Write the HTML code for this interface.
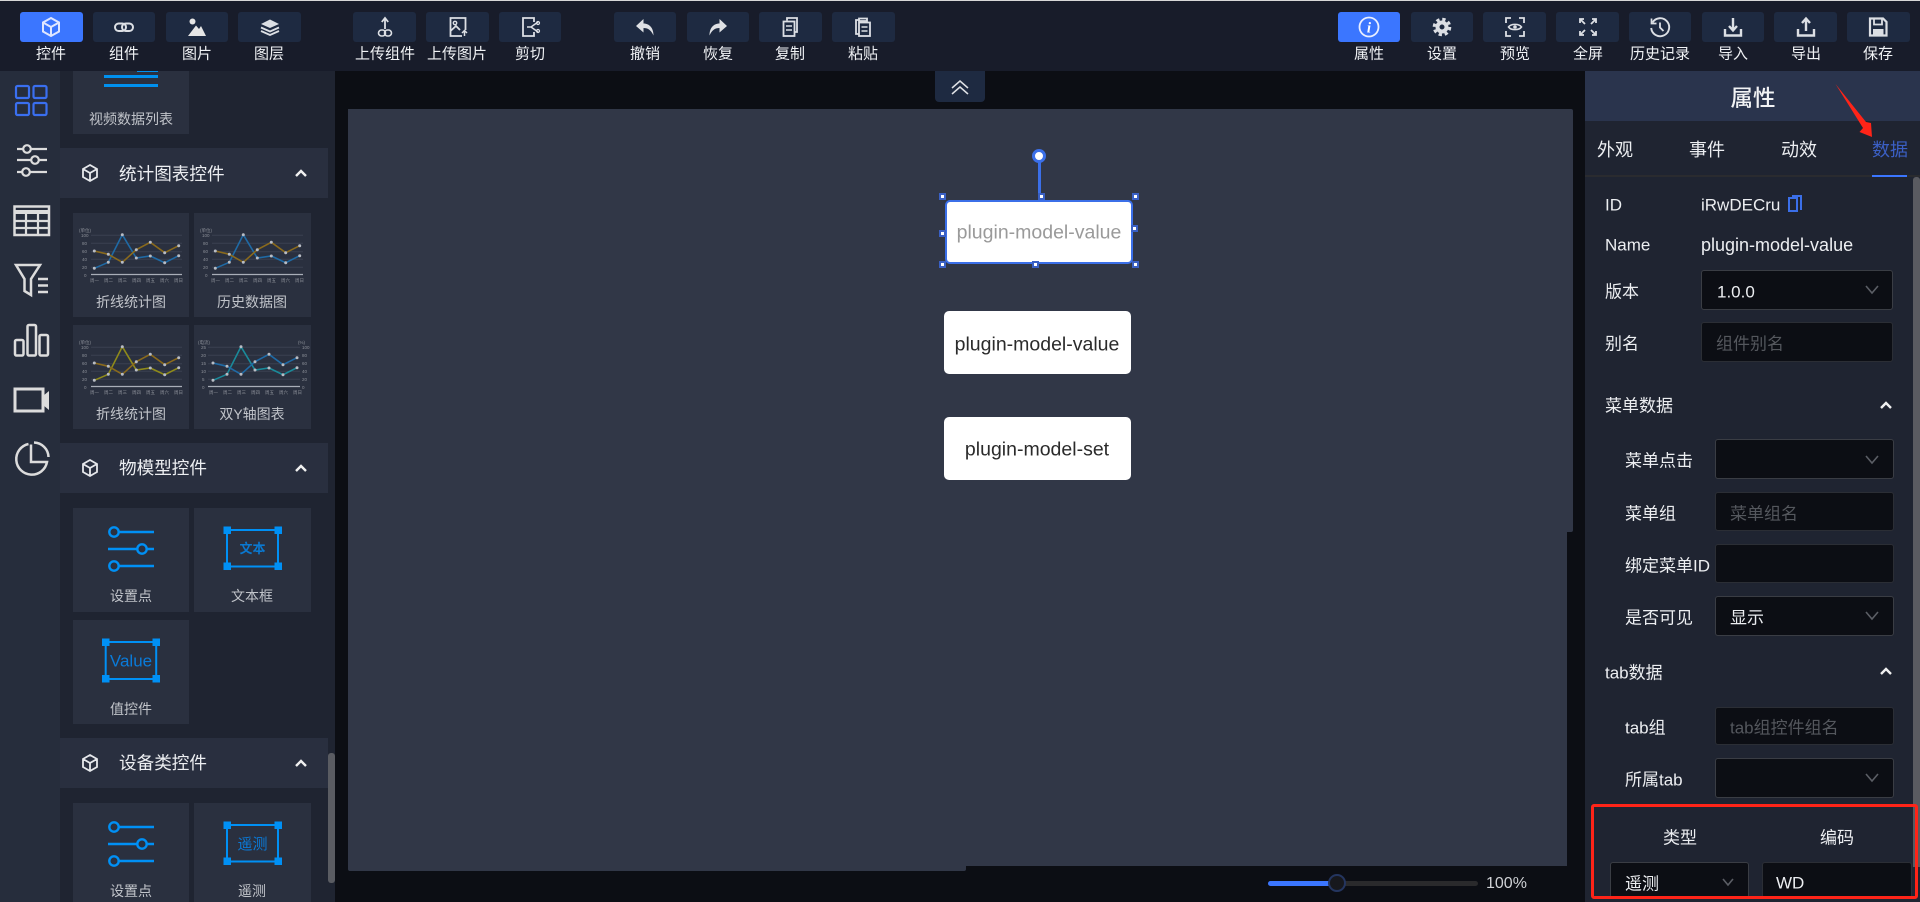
<!DOCTYPE html>
<html lang="zh"><head><meta charset="utf-8"><title>属性</title>
<style>
html,body{margin:0;padding:0;background:#0c0e14;width:1920px;height:902px;overflow:hidden;}
#root{position:absolute;left:0;top:0;width:1920px;height:902px;overflow:hidden;font-family:"Liberation Sans","Noto Sans CJK SC",sans-serif;color:#e6e8ec;}
.a{position:absolute;}
.c{position:absolute;white-space:nowrap;line-height:1;transform:translate(-50%,-50%);}
.l{position:absolute;white-space:nowrap;line-height:1;transform:translateY(-50%);}
.b{position:absolute;top:12px;height:30px;background:#1e2a41;border-radius:3px;}
.b.on{background:#3b76ff;}
.tl{font-size:15px;color:#f0f2f5;margin-top:1px;}
svg{position:absolute;overflow:visible;}
.i{width:24px;height:24px;top:15px;fill:none;stroke:#dcdfe4;stroke-width:2;}
.card{position:absolute;width:116px;height:104px;background:#2a303f;}
.card2{width:117px;}
.cl{font-size:14px;color:#c1c4ca;}
.head{position:absolute;left:60px;width:268px;height:50px;background:#292f3f;}
.ht{font-size:17.6px;color:#eceef1;margin-top:1px;}
.f{font-size:17px;color:#eceef1;margin-top:1px;}
.n{margin-top:0;}
.in{position:absolute;background:#0c0e14;border:1px solid #2b2e35;border-radius:3px;box-sizing:border-box;}
.ph{font-size:17px;color:#54575d;margin-top:1px;}
.ar{fill:none;stroke:#5b5e65;stroke-width:1.6;}
.ch{fill:none;stroke:#f0f0f0;stroke-width:2.4;}
.rail{fill:none;stroke:#dcdcdc;stroke-width:2.5;}
.h{position:absolute;width:7px;height:7px;background:#fff;border:2px solid #3a60c4;box-sizing:border-box;}
</style></head><body><div id="root">
<div class="a" style="left:0;top:0;width:1920px;height:1px;background:#d8d8d8"></div>
<div class="a" style="left:0;top:1px;width:1920px;height:70px;background:#181c2a"></div>

<!-- toolbar buttons -->
<div class="b on" style="left:20px;width:63px"></div>
<div class="b" style="left:93px;width:62px"></div>
<div class="b" style="left:166px;width:62px"></div>
<div class="b" style="left:238px;width:63px"></div>
<div class="b" style="left:353px;width:63px"></div>
<div class="b" style="left:426px;width:63px"></div>
<div class="b" style="left:499px;width:62px"></div>
<div class="b" style="left:614px;width:62px"></div>
<div class="b" style="left:687px;width:62px"></div>
<div class="b" style="left:759px;width:63px"></div>
<div class="b" style="left:832px;width:63px"></div>
<div class="b on" style="left:1338px;width:62px"></div>
<div class="b" style="left:1411px;width:62px"></div>
<div class="b" style="left:1483px;width:63px"></div>
<div class="b" style="left:1556px;width:63px"></div>
<div class="b" style="left:1629px;width:62px"></div>
<div class="b" style="left:1702px;width:62px"></div>
<div class="b" style="left:1774px;width:63px"></div>
<div class="b" style="left:1847px;width:63px"></div>

<!-- toolbar labels -->
<div class="c tl" style="left:51px;top:53px">控件</div>
<div class="c tl" style="left:124px;top:53px">组件</div>
<div class="c tl" style="left:197px;top:53px">图片</div>
<div class="c tl" style="left:269px;top:53px">图层</div>
<div class="c tl" style="left:385px;top:53px">上传组件</div>
<div class="c tl" style="left:457px;top:53px">上传图片</div>
<div class="c tl" style="left:530px;top:53px">剪切</div>
<div class="c tl" style="left:645px;top:53px">撤销</div>
<div class="c tl" style="left:718px;top:53px">恢复</div>
<div class="c tl" style="left:790px;top:53px">复制</div>
<div class="c tl" style="left:863px;top:53px">粘贴</div>
<div class="c tl" style="left:1369px;top:53px">属性</div>
<div class="c tl" style="left:1442px;top:53px">设置</div>
<div class="c tl" style="left:1515px;top:53px">预览</div>
<div class="c tl" style="left:1588px;top:53px">全屏</div>
<div class="c tl" style="left:1660px;top:53px">历史记录</div>
<div class="c tl" style="left:1733px;top:53px">导入</div>
<div class="c tl" style="left:1806px;top:53px">导出</div>
<div class="c tl" style="left:1878px;top:53px">保存</div>

<!-- toolbar icons -->
<svg class="i" style="left:39px;stroke:#dfe6ff" viewBox="0 0 24 24"><path d="M12 3L20 7.5V16.5L12 21L4 16.5V7.5Z M4 7.5L12 12L20 7.5 M12 12V21"/></svg>
<svg class="i" style="left:112px" viewBox="0 0 24 24"><rect x="3" y="8.5" width="11" height="7.5" rx="3.7"/><rect x="10" y="8.5" width="11" height="7.5" rx="3.7"/></svg>
<svg class="i" style="left:185px;fill:#e6e6e6;stroke:none" viewBox="0 0 24 24"><circle cx="7.5" cy="6.5" r="3"/><path d="M3 21L11 10.5L14 14L16 11L21 21Z"/></svg>
<svg class="i" style="left:258px" viewBox="0 0 24 24"><path d="M12 4.5L21 9L12 13L3 9Z" fill="#dcdfe4" stroke="none"/><path d="M3 12.5L12 16.5L21 12.5M3 16L12 20L21 16" stroke-width="1.8"/></svg>
<svg class="i" style="left:373px" viewBox="0 0 24 24"><path d="M12 3V14M8.8 7L12 3L15.2 7" stroke-width="1.8"/><rect x="5.5" y="15" width="7" height="6" rx="3" stroke-width="1.6"/><rect x="11.5" y="15" width="7" height="6" rx="3" stroke-width="1.6"/></svg>
<svg class="i" style="left:446px" viewBox="0 0 24 24"><path d="M16 21H4.5V3H19.5V15M4.5 16L10 11L14 15" stroke-width="1.8"/><circle cx="9" cy="8" r="1.7" stroke-width="1.4"/><path d="M18.5 21V16M16 18L18.5 15.5L21 18" stroke-width="1.5"/></svg>
<svg class="i" style="left:518px" viewBox="0 0 24 24"><path d="M16 7V3H5V21H16V17" stroke-width="1.8"/><path d="M9 12H13L20 7M13 12L20 17" stroke-width="1.5"/><circle cx="20" cy="8" r="1.5" stroke-width="1.2"/><circle cx="20" cy="16" r="1.5" stroke-width="1.2"/></svg>
<svg class="i" style="left:633px;fill:#dfe1e5;stroke:none" viewBox="0 0 24 24"><path d="M10.5 4L3 11L10.5 17.5V13C15 13 18 15 20.5 20.5C20.5 13 16.5 8.5 10.5 8.5Z"/></svg>
<svg class="i" style="left:706px;fill:#dfe1e5;stroke:none" viewBox="0 0 24 24"><path d="M13.5 4L21 11L13.5 17.5V13C9 13 6 15 3.5 20.5C3.5 13 7.5 8.5 13.5 8.5Z"/></svg>
<svg class="i" style="left:778px" viewBox="0 0 24 24"><path d="M9 5.5V3H19V17H16.5" stroke-width="1.8"/><rect x="5.5" y="6.5" width="11" height="14.5" stroke-width="1.8"/><path d="M8 11H14M8 15H14" stroke-width="1.5"/></svg>
<svg class="i" style="left:851px" viewBox="0 0 24 24"><path d="M8 5H5V19H8M8 3.5H16V6H8Z" stroke-width="1.8"/><rect x="8" y="7.5" width="11" height="13.5" stroke-width="1.8"/><path d="M10.5 12H16.5M10.5 16H16.5" stroke-width="1.5"/></svg>
<svg class="i" style="left:1357px;stroke:#e8eeff" viewBox="0 0 24 24"><circle cx="12" cy="12" r="9.5" stroke-width="1.8"/><text x="12" y="17.5" text-anchor="middle" font-family="Liberation Serif,serif" font-style="italic" font-weight="700" font-size="15" fill="#fff" stroke="none">i</text></svg>
<svg class="i" style="left:1430px" viewBox="0 0 24 24"><circle cx="12" cy="12" r="4.5" stroke-width="4"/><circle cx="12" cy="12" r="7.8" stroke-width="3" stroke-dasharray="3.3 2.83"/></svg>
<svg class="i" style="left:1503px" viewBox="0 0 24 24"><path d="M8 3H3V8M16 3H21V8M8 21H3V16M16 21H21V16" stroke-width="1.8"/><path d="M5.5 12C8 8.5 16 8.5 18.5 12C16 15.5 8 15.5 5.5 12Z" stroke-width="1.6"/><circle cx="12" cy="12" r="1.8" fill="#dcdfe4" stroke="none"/></svg>
<svg class="i" style="left:1576px" viewBox="0 0 24 24"><path d="M9 9L4 4M4 8V4H8M15 9L20 4M16 4H20V8M9 15L4 20M4 16V20H8M15 15L20 20M16 20H20V16" stroke-width="1.8"/></svg>
<svg class="i" style="left:1648px" viewBox="0 0 24 24"><path d="M4.5 7.5A9 9 0 1 1 3.2 13" stroke-width="1.9"/><path d="M3.5 3.5V8.5H8.5" stroke-width="1.7"/><path d="M12 7.5V12.5L15.5 16" stroke-width="1.8"/></svg>
<svg class="i" style="left:1721px" viewBox="0 0 24 24"><path d="M12 3V15M8 11L12 15.5L16 11" stroke-width="2.4"/><path d="M4 14V20.5H20V14" stroke-width="2.4"/></svg>
<svg class="i" style="left:1794px" viewBox="0 0 24 24"><path d="M12 16V4M8 8L12 3.5L16 8" stroke-width="2.4"/><path d="M4 14V20.5H20V14" stroke-width="2.4"/></svg>
<svg class="i" style="left:1866px" viewBox="0 0 24 24"><path d="M4 3.5H17L20.5 7V20.5H4Z" stroke-width="2.2"/><path d="M8 3.5V9.5H16V3.5" stroke-width="1.8"/><rect x="7" y="14" width="10.5" height="6.5" fill="#dcdfe4" stroke="none"/></svg>

<!-- left rail -->
<div class="a" style="left:0;top:71px;width:60px;height:831px;background:#262d3c"></div>
<div class="a" style="left:60px;top:71px;width:275px;height:831px;background:#1f2431"></div>

<svg class="a" style="left:0;top:71px" width="60" height="420" viewBox="0 71 60 420">
<g fill="none" stroke="#3a6ff0" stroke-width="2.2"><rect x="16" y="86" width="13" height="12" rx="1.5"/><rect x="33.5" y="86" width="13" height="12" rx="1.5"/><rect x="16" y="103" width="13" height="12" rx="1.5"/><rect x="33.5" y="103" width="13" height="12" rx="1.5"/></g>
<g class="rail" style="stroke-width:2.2"><path d="M17 149H23M31 149H47M17 160H31M39 160H47M17 172H22M30 172H47"/><circle cx="27" cy="149" r="3.8"/><circle cx="35" cy="160" r="3.8"/><circle cx="26" cy="172" r="3.8"/></g>
<g class="rail"><rect x="14.5" y="206.5" width="34.5" height="28.5"/><path d="M14.5 212H49" stroke-width="4"/><path d="M14.5 221H49M14.5 228H49M26 213.5V235M38 213.5V235" stroke-width="2.2"/></g>
<g class="rail"><path d="M16 265H40L31 279V295L24.5 291V279Z"/><path d="M38 279H48M38 285.5H48M38 292H48"/></g>
<g class="rail"><rect x="15" y="340" width="8.5" height="15.5" rx="1.5"/><rect x="27.5" y="325" width="8.5" height="30.5" rx="1.5"/><rect x="39.5" y="335" width="8.5" height="20.5" rx="1.5"/></g>
<g class="rail" style="stroke-width:3"><rect x="15" y="389" width="28" height="22"/></g><path d="M43 396L49 391V410L43 405Z" fill="#dcdcdc"/>
<g class="rail"><path d="M28.5 444A15.5 15.5 0 1 0 47 462H31V444.5"/><path d="M34 442.5A15 15 0 0 1 48.5 457"/></g>
</svg>

<!-- video list card -->
<div class="card" style="left:73px;top:71px;height:63px"></div>
<div class="a" style="left:137px;top:71px;width:21px;height:1px;background:#0090ee"></div>
<div class="a" style="left:104px;top:74.5px;width:54px;height:3px;background:#0090ee"></div>
<div class="a" style="left:104px;top:84px;width:54px;height:3px;background:#0090ee"></div>
<div class="c cl" style="left:131px;top:119px">视频数据列表</div>

<!-- section heads -->
<div class="head" style="top:148px"></div>
<svg class="a" style="left:81px;top:164px;fill:none;stroke:#e6e8ec;stroke-width:1.8" width="18" height="18" viewBox="0 0 18 18"><path d="M9 1L16 5V13L9 17L2 13V5Z M2 5L9 9L16 5 M9 9V17"/></svg>
<div class="l ht" style="left:119px;top:174px">统计图表控件</div>
<svg class="a ch" style="left:295px;top:169px" width="12" height="9" viewBox="0 0 12 9"><path d="M1 7L6 2L11 7"/></svg>

<div class="head" style="top:443px"></div>
<svg class="a" style="left:81px;top:459px;fill:none;stroke:#e6e8ec;stroke-width:1.8" width="18" height="18" viewBox="0 0 18 18"><path d="M9 1L16 5V13L9 17L2 13V5Z M2 5L9 9L16 5 M9 9V17"/></svg>
<div class="l ht" style="left:119px;top:468px">物模型控件</div>
<svg class="a ch" style="left:295px;top:464px" width="12" height="9" viewBox="0 0 12 9"><path d="M1 7L6 2L11 7"/></svg>

<div class="head" style="top:738px"></div>
<svg class="a" style="left:81px;top:754px;fill:none;stroke:#e6e8ec;stroke-width:1.8" width="18" height="18" viewBox="0 0 18 18"><path d="M9 1L16 5V13L9 17L2 13V5Z M2 5L9 9L16 5 M9 9V17"/></svg>
<div class="l ht" style="left:119px;top:763px">设备类控件</div>
<svg class="a ch" style="left:295px;top:759px" width="12" height="9" viewBox="0 0 12 9"><path d="M1 7L6 2L11 7"/></svg>

<!-- chart cards -->
<div class="card" style="left:73px;top:213px"></div>
<svg class="a" style="left:73px;top:213px" width="116" height="75" viewBox="0 0 116 75" font-family="Liberation Sans,Noto Sans CJK SC,sans-serif">
<g stroke="#3a4050" stroke-width="1"><path d="M18 22.3H109M18 30.3H109M18 38.7H109M18 46.3H109M18 54.3H109"/></g><path d="M18 61.5H109" stroke="#a9aeb8" stroke-width="1.2"/>
<polyline points="21.3,55.3 35.3,49.3 49.3,21.7 63.3,45 77.3,43 91.7,49.7 105.7,42.7" fill="none" stroke="#1f6aa5" stroke-width="1.6"/>
<polyline points="21.3,38 35.3,41.3 49.3,49.3 63.3,36.7 77.3,29.3 91.7,39.7 105.7,32.7" fill="none" stroke="#8a6a1c" stroke-width="1.6"/>
<g fill="#b8bcc4"><circle cx="21.3" cy="55.3" r="1.5"/><circle cx="35.3" cy="49.3" r="1.5"/><circle cx="49.3" cy="21.7" r="1.5"/><circle cx="63.3" cy="45" r="1.5"/><circle cx="77.3" cy="43" r="1.5"/><circle cx="91.7" cy="49.7" r="1.5"/><circle cx="105.7" cy="42.7" r="1.5"/><circle cx="21.3" cy="38" r="1.5"/><circle cx="35.3" cy="41.3" r="1.5"/><circle cx="49.3" cy="49.3" r="1.5"/><circle cx="63.3" cy="36.7" r="1.5"/><circle cx="77.3" cy="29.3" r="1.5"/><circle cx="91.7" cy="39.7" r="1.5"/><circle cx="105.7" cy="32.7" r="1.5"/></g>
<g fill="#8c9098" font-size="4.5"><text x="6" y="19">(单位)</text><text x="8" y="24">100</text><text x="9" y="32">80</text><text x="9" y="40">60</text><text x="9" y="48">40</text><text x="9" y="56">20</text><text x="11" y="64">0</text><text x="17" y="69">周一</text><text x="31" y="69">周二</text><text x="45" y="69">周三</text><text x="59" y="69">周四</text><text x="73" y="69">周五</text><text x="87" y="69">周六</text><text x="101" y="69">周日</text></g></svg>
<div class="c cl" style="left:131px;top:302px">折线统计图</div>

<div class="card card2" style="left:194px;top:213px"></div>
<svg class="a" style="left:194px;top:213px" width="116" height="75" viewBox="0 0 116 75" font-family="Liberation Sans,Noto Sans CJK SC,sans-serif">
<g stroke="#3a4050" stroke-width="1"><path d="M18 22.3H109M18 30.3H109M18 38.7H109M18 46.3H109M18 54.3H109"/></g><path d="M18 61.5H109" stroke="#a9aeb8" stroke-width="1.2"/>
<polyline points="21.3,55.3 35.3,49.3 49.3,21.7 63.3,45 77.3,43 91.7,49.7 105.7,42.7" fill="none" stroke="#1f6aa5" stroke-width="1.6"/>
<polyline points="21.3,38 35.3,41.3 49.3,49.3 63.3,36.7 77.3,29.3 91.7,39.7 105.7,32.7" fill="none" stroke="#8a6a1c" stroke-width="1.6"/>
<g fill="#b8bcc4"><circle cx="21.3" cy="55.3" r="1.5"/><circle cx="35.3" cy="49.3" r="1.5"/><circle cx="49.3" cy="21.7" r="1.5"/><circle cx="63.3" cy="45" r="1.5"/><circle cx="77.3" cy="43" r="1.5"/><circle cx="91.7" cy="49.7" r="1.5"/><circle cx="105.7" cy="42.7" r="1.5"/><circle cx="21.3" cy="38" r="1.5"/><circle cx="35.3" cy="41.3" r="1.5"/><circle cx="49.3" cy="49.3" r="1.5"/><circle cx="63.3" cy="36.7" r="1.5"/><circle cx="77.3" cy="29.3" r="1.5"/><circle cx="91.7" cy="39.7" r="1.5"/><circle cx="105.7" cy="32.7" r="1.5"/></g>
<g fill="#8c9098" font-size="4.5"><text x="6" y="19">(单位)</text><text x="8" y="24">100</text><text x="9" y="32">80</text><text x="9" y="40">60</text><text x="9" y="48">40</text><text x="9" y="56">20</text><text x="11" y="64">0</text><text x="17" y="69">周一</text><text x="31" y="69">周二</text><text x="45" y="69">周三</text><text x="59" y="69">周四</text><text x="73" y="69">周五</text><text x="87" y="69">周六</text><text x="101" y="69">周日</text></g></svg>
<div class="c cl" style="left:252px;top:302px">历史数据图</div>

<div class="card" style="left:73px;top:325px"></div>
<svg class="a" style="left:73px;top:325px" width="116" height="75" viewBox="0 0 116 75" font-family="Liberation Sans,Noto Sans CJK SC,sans-serif">
<g stroke="#3a4050" stroke-width="1"><path d="M18 22.3H109M18 30.3H109M18 38.7H109M18 46.3H109M18 54.3H109"/></g><path d="M18 61.5H109" stroke="#a9aeb8" stroke-width="1.2"/>
<polyline points="21.3,55.3 35.3,49.3 49.3,21.7 63.3,45 77.3,43 91.7,49.7 105.7,42.7" fill="none" stroke="#8f8a1a" stroke-width="1.6"/>
<polyline points="21.3,38 35.3,41.3 49.3,49.3 63.3,36.7 77.3,29.3 91.7,39.7 105.7,32.7" fill="none" stroke="#8a6a1c" stroke-width="1.6"/>
<g fill="#b8bcc4"><circle cx="21.3" cy="55.3" r="1.5"/><circle cx="35.3" cy="49.3" r="1.5"/><circle cx="49.3" cy="21.7" r="1.5"/><circle cx="63.3" cy="45" r="1.5"/><circle cx="77.3" cy="43" r="1.5"/><circle cx="91.7" cy="49.7" r="1.5"/><circle cx="105.7" cy="42.7" r="1.5"/><circle cx="21.3" cy="38" r="1.5"/><circle cx="35.3" cy="41.3" r="1.5"/><circle cx="49.3" cy="49.3" r="1.5"/><circle cx="63.3" cy="36.7" r="1.5"/><circle cx="77.3" cy="29.3" r="1.5"/><circle cx="91.7" cy="39.7" r="1.5"/><circle cx="105.7" cy="32.7" r="1.5"/></g>
<g fill="#8c9098" font-size="4.5"><text x="6" y="19">(单位)</text><text x="8" y="24">100</text><text x="9" y="32">80</text><text x="9" y="40">60</text><text x="9" y="48">40</text><text x="9" y="56">20</text><text x="11" y="64">0</text><text x="17" y="69">周一</text><text x="31" y="69">周二</text><text x="45" y="69">周三</text><text x="59" y="69">周四</text><text x="73" y="69">周五</text><text x="87" y="69">周六</text><text x="101" y="69">周日</text></g></svg>
<div class="c cl" style="left:131px;top:414px">折线统计图</div>

<div class="card card2" style="left:194px;top:325px"></div>
<svg class="a" style="left:194px;top:325px" width="117" height="75" viewBox="0 0 117 75" font-family="Liberation Sans,Noto Sans CJK SC,sans-serif">
<g stroke="#3a4050" stroke-width="1"><path d="M14 22.3H106M14 30.3H106M14 38.7H106M14 46.3H106M14 54.3H106"/></g><path d="M14 61.5H106" stroke="#a9aeb8" stroke-width="1.2"/>
<polyline points="19,55.3 33,49.3 47,21.7 61,45 75,43 89,49.7 103,42.7" fill="none" stroke="#1a8a9a" stroke-width="1.6"/>
<polyline points="19,38 33,41.3 47,49.3 61,36.7 75,29.3 89,39.7 103,32.7" fill="none" stroke="#1f6aa5" stroke-width="1.6"/>
<g fill="#b8bcc4"><circle cx="19" cy="55.3" r="1.5"/><circle cx="33" cy="49.3" r="1.5"/><circle cx="47" cy="21.7" r="1.5"/><circle cx="61" cy="45" r="1.5"/><circle cx="75" cy="43" r="1.5"/><circle cx="89" cy="49.7" r="1.5"/><circle cx="103" cy="42.7" r="1.5"/><circle cx="19" cy="38" r="1.5"/><circle cx="33" cy="41.3" r="1.5"/><circle cx="47" cy="49.3" r="1.5"/><circle cx="61" cy="36.7" r="1.5"/><circle cx="75" cy="29.3" r="1.5"/><circle cx="89" cy="39.7" r="1.5"/><circle cx="103" cy="32.7" r="1.5"/></g>
<g fill="#8c9098" font-size="4.5"><text x="4" y="19">(电流)</text><text x="104" y="19">(%)</text><text x="7" y="24">25</text><text x="7" y="32">20</text><text x="7" y="40">15</text><text x="7" y="48">10</text><text x="8" y="56">5</text><text x="8" y="64">0</text><text x="108" y="24">100</text><text x="108" y="32">80</text><text x="108" y="40">60</text><text x="108" y="48">40</text><text x="108" y="56">20</text><text x="108" y="64">0</text><text x="15" y="69">周一</text><text x="29" y="69">周二</text><text x="43" y="69">周三</text><text x="57" y="69">周四</text><text x="71" y="69">周五</text><text x="85" y="69">周六</text><text x="99" y="69">周日</text></g></svg>
<div class="c cl" style="left:252px;top:414px">双Y轴图表</div>

<!-- thing-model cards -->
<div class="card" style="left:73px;top:508px"></div>
<svg class="a" style="left:104px;top:520px;fill:none;stroke:#0090f5;stroke-width:2.4" width="56" height="56" viewBox="0 0 56 56"><path d="M15 12H50M4 29H33M43 29H50M15 46H50"/><circle cx="10" cy="12" r="4.7"/><circle cx="38" cy="29" r="4.7"/><circle cx="10" cy="46" r="4.7"/></svg>
<div class="c cl" style="left:131px;top:596px">设置点</div>

<div class="card card2" style="left:194px;top:508px"></div>
<svg class="a" style="left:222px;top:525px" width="62" height="47" viewBox="0 0 62 47" font-family="Liberation Sans,Noto Sans CJK SC,sans-serif"><rect x="5" y="5" width="51" height="36.5" fill="none" stroke="#0090f5" stroke-width="2"/><g fill="#0090f5"><rect x="1.5" y="1.5" width="7.5" height="7.5"/><rect x="52.5" y="1.5" width="7.5" height="7.5"/><rect x="1.5" y="37.5" width="7.5" height="7.5"/><rect x="52.5" y="37.5" width="7.5" height="7.5"/></g><text x="30.5" y="28" text-anchor="middle" font-size="13" font-weight="700" fill="#0a78d0">文本</text></svg>
<div class="c cl" style="left:252px;top:596px">文本框</div>

<div class="card" style="left:73px;top:620px"></div>
<svg class="a" style="left:101px;top:637px" width="62" height="47" viewBox="0 0 62 47" font-family="Liberation Sans,sans-serif"><rect x="4.7" y="5" width="50.5" height="37" fill="none" stroke="#0090f5" stroke-width="2"/><g fill="#0090f5"><rect x="1" y="1.5" width="7.5" height="7.5"/><rect x="51.5" y="1.5" width="7.5" height="7.5"/><rect x="1" y="38" width="7.5" height="7.5"/><rect x="51.5" y="38" width="7.5" height="7.5"/></g><text x="30" y="29.5" text-anchor="middle" font-size="17" fill="#0a7ad8">Value</text></svg>
<div class="c cl" style="left:131px;top:709px">值控件</div>

<!-- device cards -->
<div class="card" style="left:73px;top:803px;height:99px"></div>
<svg class="a" style="left:104px;top:815px;fill:none;stroke:#0090f5;stroke-width:2.4" width="56" height="56" viewBox="0 0 56 56"><path d="M15 12H50M4 29H33M43 29H50M15 46H50"/><circle cx="10" cy="12" r="4.7"/><circle cx="38" cy="29" r="4.7"/><circle cx="10" cy="46" r="4.7"/></svg>
<div class="c cl" style="left:131px;top:891px">设置点</div>

<div class="card card2" style="left:194px;top:803px;height:99px"></div>
<svg class="a" style="left:222px;top:820px" width="62" height="47" viewBox="0 0 62 47" font-family="Liberation Sans,Noto Sans CJK SC,sans-serif"><rect x="5" y="5" width="51" height="36.5" fill="none" stroke="#0090f5" stroke-width="2"/><g fill="#0090f5"><rect x="1.5" y="1.5" width="7.5" height="7.5"/><rect x="52.5" y="1.5" width="7.5" height="7.5"/><rect x="1.5" y="37.5" width="7.5" height="7.5"/><rect x="52.5" y="37.5" width="7.5" height="7.5"/></g><text x="30.5" y="29" text-anchor="middle" font-size="15" fill="#0a7ad8">遥测</text></svg>
<div class="c cl" style="left:252px;top:891px">遥测</div>

<div class="a" style="left:328px;top:753px;width:7px;height:130px;background:#5a5c62;border-radius:3px"></div>

<!-- canvas -->
<div class="a" style="left:335px;top:71px;width:1250px;height:831px;background:#0c0e14"></div>
<div class="a" style="left:348px;top:109px;width:1219px;height:757px;background:#313747"></div>
<div class="a" style="left:1567px;top:109px;width:6px;height:423px;background:#313747;border-radius:0 2px 2px 0"></div>
<div class="a" style="left:348px;top:866px;width:618px;height:5px;background:#313747;border-radius:0 0 2px 2px"></div>
<div class="a" style="left:935px;top:71px;width:50px;height:31px;background:#1e2a41;border-radius:0 0 4px 4px"></div>
<svg class="a" style="left:951px;top:80px;fill:none;stroke:#dfe1e5;stroke-width:1.5" width="18" height="15" viewBox="0 0 18 15"><path d="M1 8L9 1L17 8M1 14L9 7L17 14"/></svg>

<!-- widgets -->
<div class="a" style="left:945px;top:200px;width:188px;height:64px;background:#fff;border:2.5px solid #3b6fe8;border-radius:5px;box-sizing:border-box"></div>
<div class="c" style="left:1039px;top:233px;font-size:19.5px;color:#9a9a9a">plugin-model-value</div>
<div class="a" style="left:1038px;top:160px;width:2.5px;height:36px;background:#3b6fe8"></div>
<div class="a" style="left:1032px;top:149px;width:14px;height:14px;border-radius:50%;background:#fff;border:3px solid #3b6fe8;box-sizing:border-box"></div>
<div class="h" style="left:939px;top:193px"></div><div class="h" style="left:1038px;top:193px"></div><div class="h" style="left:1132px;top:193px"></div>
<div class="h" style="left:939px;top:230px"></div><div class="h" style="left:1131px;top:225px"></div>
<div class="h" style="left:939px;top:261px"></div><div class="h" style="left:1032px;top:261px"></div><div class="h" style="left:1132px;top:261px"></div>
<div class="a" style="left:944px;top:311px;width:187px;height:63px;background:#fff;border-radius:5px"></div>
<div class="c" style="left:1037px;top:345px;font-size:19.5px;color:#2b2b2b">plugin-model-value</div>
<div class="a" style="left:944px;top:417px;width:187px;height:63px;background:#fff;border-radius:5px"></div>
<div class="c" style="left:1037px;top:450px;font-size:19.5px;color:#2b2b2b">plugin-model-set</div>

<!-- zoom slider -->
<div class="a" style="left:1268px;top:881px;width:210px;height:5px;background:#2a2a2c;border-radius:3px"></div>
<div class="a" style="left:1268px;top:881px;width:66px;height:5px;background:#3b76ff;border-radius:3px 0 0 3px"></div>
<div class="a" style="left:1328px;top:874px;width:18px;height:18px;border-radius:50%;background:#17181d;border:2px solid #24355f;box-sizing:border-box"></div>
<div class="l" style="left:1486px;top:884px;font-size:16px;color:#d0d2d6">100%</div>

<!-- right panel -->
<div class="a" style="left:1585px;top:71px;width:335px;height:831px;background:#1f2431"></div>
<div class="a" style="left:1585px;top:71px;width:335px;height:50px;background:#2a344d"></div>
<div class="c" style="left:1753px;top:99px;font-size:22.5px;color:#f2f3f5;font-weight:500">属性</div>
<div class="c f" style="left:1615px;top:149px;font-size:18px">外观</div>
<div class="c f" style="left:1707px;top:149px;font-size:18px">事件</div>
<div class="c f" style="left:1799px;top:149px;font-size:18px">动效</div>
<div class="c f" style="left:1890px;top:149px;font-size:18px;color:#3b5fc4">数据</div>
<div class="a" style="left:1585px;top:175px;width:335px;height:2px;background:#2a2b2f"></div>
<div class="a" style="left:1872px;top:175px;width:35px;height:2px;background:#3b76ff"></div>
<div class="a" style="left:1913px;top:177px;width:7px;height:690px;background:#5a5b61;border-radius:3px 3px 0 0"></div>

<div class="l f n" style="left:1605px;top:205px">ID</div>
<div class="l f n" style="left:1701px;top:205px">iRwDECru</div>
<svg class="a" style="left:1787px;top:194px;fill:none;stroke:#3b6fe8;stroke-width:2" width="16" height="19" viewBox="0 0 16 19"><path d="M5 2H14V16M2 4H10V17H2Z"/></svg>
<div class="l f n" style="left:1605px;top:245px">Name</div>
<div class="l f n" style="left:1701px;top:245px;font-size:18px">plugin-model-value</div>

<div class="l f" style="left:1605px;top:291px">版本</div>
<div class="in" style="left:1701px;top:270px;width:192px;height:40px;border-color:#3a3d44"></div>
<div class="l f" style="left:1717px;top:291px">1.0.0</div>
<svg class="a ar" style="left:1865px;top:285px" width="14" height="9" viewBox="0 0 14 9"><path d="M1 1L7 8L13 1"/></svg>

<div class="l f" style="left:1605px;top:343px">别名</div>
<div class="in" style="left:1701px;top:322px;width:192px;height:40px"></div>
<div class="l ph" style="left:1716px;top:343px">组件别名</div>

<div class="l f" style="left:1605px;top:405px">菜单数据</div>
<svg class="a ch" style="left:1880px;top:401px" width="12" height="9" viewBox="0 0 12 9"><path d="M1 7L6 2L11 7"/></svg>

<div class="l f" style="left:1625px;top:460px">菜单点击</div>
<div class="in" style="left:1715px;top:439px;width:179px;height:40px;border-color:#3a3d44"></div>
<svg class="a ar" style="left:1865px;top:455px" width="14" height="9" viewBox="0 0 14 9"><path d="M1 1L7 8L13 1"/></svg>

<div class="l f" style="left:1625px;top:513px">菜单组</div>
<div class="in" style="left:1715px;top:492px;width:179px;height:39px"></div>
<div class="l ph" style="left:1730px;top:513px">菜单组名</div>

<div class="l f" style="left:1625px;top:565px">绑定菜单ID</div>
<div class="in" style="left:1715px;top:544px;width:179px;height:39px"></div>

<div class="l f" style="left:1625px;top:617px">是否可见</div>
<div class="in" style="left:1715px;top:596px;width:179px;height:40px;border-color:#3a3d44"></div>
<div class="l f" style="left:1730px;top:617px">显示</div>
<svg class="a ar" style="left:1865px;top:611px" width="14" height="9" viewBox="0 0 14 9"><path d="M1 1L7 8L13 1"/></svg>

<div class="l f" style="left:1605px;top:672px">tab数据</div>
<svg class="a ch" style="left:1880px;top:667px" width="12" height="9" viewBox="0 0 12 9"><path d="M1 7L6 2L11 7"/></svg>

<div class="l f" style="left:1625px;top:727px">tab组</div>
<div class="in" style="left:1715px;top:707px;width:179px;height:38px"></div>
<div class="l ph" style="left:1730px;top:727px">tab组控件组名</div>

<div class="l f" style="left:1625px;top:779px">所属tab</div>
<div class="in" style="left:1715px;top:758px;width:179px;height:40px;border-color:#3a3d44"></div>
<svg class="a ar" style="left:1865px;top:773px" width="14" height="9" viewBox="0 0 14 9"><path d="M1 1L7 8L13 1"/></svg>

<div class="c f" style="left:1680px;top:837px">类型</div>
<div class="c f" style="left:1837px;top:837px">编码</div>
<div class="in" style="left:1610px;top:862px;width:139px;height:36px;border-color:#3a3d44"></div>
<div class="l f" style="left:1625px;top:883px">遥测</div>
<svg class="a ar" style="left:1722px;top:878px" width="12" height="8" viewBox="0 0 12 8"><path d="M1 1L6 7L11 1"/></svg>
<div class="in" style="left:1762px;top:862px;width:150px;height:36px"></div>
<div class="l f n" style="left:1776px;top:883px">WD</div>

<!-- annotations -->
<div class="a" style="left:1591px;top:804px;width:327px;height:95px;border:3px solid #ff2418;border-radius:3px;box-sizing:border-box"></div>
<svg class="a" style="left:1830px;top:80px" width="50" height="62" viewBox="1830 80 50 62"><path d="M1835.5 84L1866 122L1871 123L1872 137L1859.5 132L1863 128Z" fill="#ff2418"/></svg>
</div></body></html>
